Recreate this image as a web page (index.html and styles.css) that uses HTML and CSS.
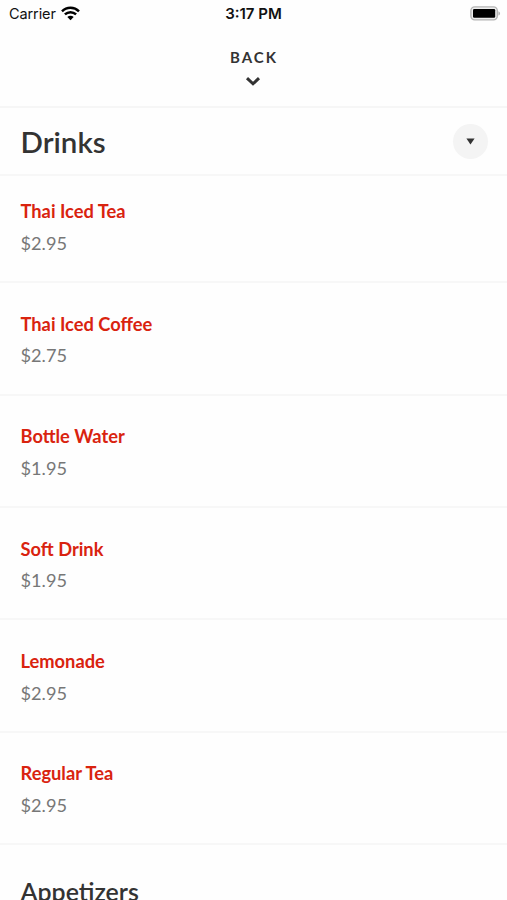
FILE: index.html
```html
<!DOCTYPE html>
<html lang="en">
<head>
    <meta charset="UTF-8">
    <meta name="viewport" content="width=device-width, initial-scale=1.0">
    <title>Menu</title>
    <link rel="stylesheet" href="styles.css">
</head>
<body>
    <div class="status-bar">
        <div class="carrier">
            <span>Carrier</span>
            <svg class="wifi" width="19" height="15" viewBox="0 0 19 15">
                <path d="M1 5.3C5.7 .7 13.3 .7 18 5.3M3.9 8.4C7.1 5.4 11.9 5.4 15.1 8.4" fill="none" stroke="#000" stroke-width="2.5"/>
                <path d="M9.5 14.2L6.3 11C8.1 9.4 10.9 9.4 12.7 11Z" fill="#000"/>
            </svg>
        </div>
        <div class="time">3:17 PM</div>
        <div class="battery">
            <svg width="31" height="15" viewBox="0 0 31 15">
                <rect x=".9" y=".9" width="26.4" height="13" rx="3.8" fill="#eee" stroke="#b4b4b4" stroke-width="1.4"/>
                <rect x="3" y="3" width="22.2" height="8.8" rx="1.2" fill="#000"/>
                <path d="M28.4 5.2C30.6 6 30.6 8.8 28.4 9.6Z" fill="#b4b4b4"/>
            </svg>
        </div>
    </div>

    <div class="back">
        <span class="back-label">BACK</span>
        <svg width="16" height="10" viewBox="0 0 16 10">
            <path d="M2 2.2L8 7.8L14 2.2" fill="none" stroke="#333" stroke-width="3"/>
        </svg>
    </div>

    <div class="section-header">
        <h1>Drinks</h1>
        <button class="toggle" aria-label="Sections">
            <svg width="9" height="7" viewBox="0 0 9 7">
                <path d="M.4 .5H8.6L4.5 6.6Z" fill="#333"/>
            </svg>
        </button>
    </div>

    <ul class="menu">
        <li class="item">
            <div class="name">Thai Iced Tea</div>
            <div class="price">$2.95</div>
        </li>
        <li class="item">
            <div class="name">Thai Iced Coffee</div>
            <div class="price">$2.75</div>
        </li>
        <li class="item">
            <div class="name">Bottle Water</div>
            <div class="price">$1.95</div>
        </li>
        <li class="item">
            <div class="name">Soft Drink</div>
            <div class="price">$1.95</div>
        </li>
        <li class="item">
            <div class="name">Lemonade</div>
            <div class="price">$2.95</div>
        </li>
        <li class="item">
            <div class="name">Regular Tea</div>
            <div class="price">$2.95</div>
        </li>
    </ul>

    <h2 class="next-section">Appetizers</h2>
</body>
</html>
```
FILE: styles.css
```css
* {
    box-sizing: border-box;
}
body {
    margin: 0;
    height: 900px;
    overflow: hidden;
    background: #fefefe;
    color: #333;
    font-family: Lato, sans-serif;
}
.status-bar {
    display: grid;
    grid-template-columns: 1fr auto 1fr;
    align-items: center;
    height: 27px;
    padding: 0 6px 0 9px;
    color: #111;
    font-family: Inter, sans-serif;
    font-size: 14.5px;
}
.carrier {
    display: flex;
    align-items: center;
    gap: 5.5px;
    letter-spacing: -0.1px;
}
.time {
    margin-right: 3px;
    font-size: 15px;
    font-weight: 600;
}
.battery {
    display: flex;
    justify-content: flex-end;
}
.back {
    display: flex;
    flex-direction: column;
    align-items: center;
    height: 81px;
    padding-top: 20px;
    padding-right: 1px;
    border-bottom: 2px solid #f6f6f6;
}
.back-label {
    margin-right: -2px;
    margin-bottom: 9px;
    font-size: 15px;
    font-weight: 700;
    line-height: 20px;
    letter-spacing: 2px;
}
.section-header {
    display: flex;
    align-items: center;
    justify-content: space-between;
    height: 68px;
    padding: 0 19px 0 20.5px;
    border-bottom: 2px solid #f7f7f7;
}
h1 {
    margin: 1px 0 0;
    font-size: 29.5px;
    font-weight: 600;
    line-height: 36px;
}
.toggle {
    display: flex;
    align-items: center;
    justify-content: center;
    width: 35px;
    height: 35px;
    margin-top: 1px;
    padding: 0;
    border: none;
    border-radius: 50%;
    background: #f4f4f4;
}
.menu {
    margin: 0;
    padding: 0;
    list-style: none;
}
.item {
    height: 112.4px;
    padding: 28.6px 20.5px 0;
    border-bottom: 2px solid #f7f7f7;
}
.item:first-child {
    height: 107.3px;
    padding-top: 23px;
}
.name {
    color: #d9230f;
    font-size: 18.3px;
    font-weight: 700;
    line-height: 24px;
}
.price {
    margin-top: 7.5px;
    color: #777;
    font-size: 18.2px;
    line-height: 24px;
}
.next-section {
    margin: 31px 20.5px 0;
    font-size: 24.9px;
    font-weight: 600;
    line-height: 30px;
}
```
